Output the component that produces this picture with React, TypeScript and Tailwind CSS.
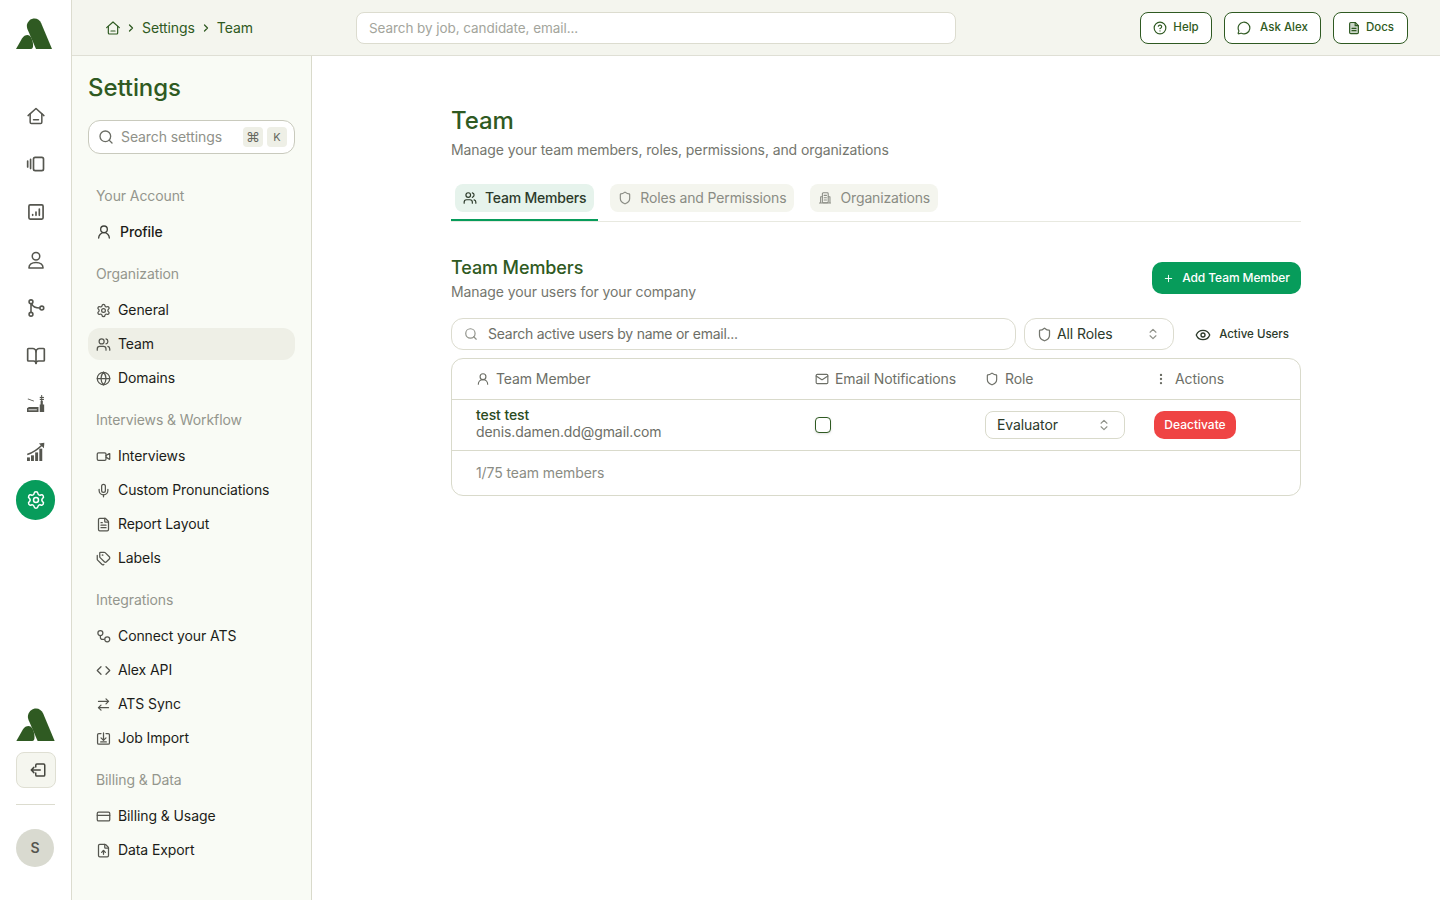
import React from "react";
import {
  Search, UserRound, Settings, Users, Globe, Video, Mic, FileText, Tags, Code, ArrowRightLeft, CreditCard, FileUp,
  Shield, MessageCircle, CircleHelp, Mail, EllipsisVertical, Eye, Plus, ChevronRight, ChevronsUpDown, BookOpen,
} from "lucide-react";

type IconProps = { className?: string };

const Logo = ({ className }: IconProps) => (
  <svg viewBox="0 0 36 31" className={className} fill="#2f5a22">
    <path d="M11 6.500C12.200 2.600 15 0.500 18.500 0.500C21.500 0.500 24 2.400 25.200 5.200L36 31H20L11.600 11.500C11 10 10.600 8 11 6.500Z" />
    <path d="M0 31L6 20.500C7.500 18 9.500 17 11.500 17C14 17 16 20 16.800 24.500C17.200 27 17.500 31 15 31Z" />
  </svg>
);

const HomeIcon = ({ className }: IconProps) => (
  <svg viewBox="0 0 24 24" className={className} fill="none" stroke="currentColor" strokeWidth="1.800" strokeLinejoin="round" strokeLinecap="round">
    <path d="M2.500 11.500L12 3L21.500 11.500" />
    <path d="M5 9.500V19.500C5 20.300 5.700 21 6.500 21H17.500C18.300 21 19 20.300 19 19.500V9.500" />
    <path d="M9 16.500H15" />
  </svg>
);
const CardsIcon = ({ className }: IconProps) => (
  <svg viewBox="0 0 24 24" className={className} fill="none" stroke="currentColor" strokeWidth="2" strokeLinecap="round">
    <rect x="9" y="4" width="12" height="16" rx="2" />
    <path d="M5.500 6.500V17.500M2 8.500V15.500" />
  </svg>
);
const ReportIcon = ({ className }: IconProps) => (
  <svg viewBox="0 0 24 24" className={className} fill="none" stroke="currentColor" strokeWidth="2" strokeLinecap="round">
    <rect x="3.500" y="3.500" width="17" height="17" rx="1.500" />
    <path d="M8 16V15M12 16V12M16 16V8.500" />
  </svg>
);
const PersonIcon = ({ className }: IconProps) => (
  <svg viewBox="0 0 24 24" className={className} fill="none" stroke="currentColor" strokeWidth="1.800" strokeLinejoin="round">
    <circle cx="12" cy="7.500" r="4.500" />
    <path d="M3.500 21.500C3.500 17.500 7 15 12 15C17 15 20.500 17.500 20.500 21.500Z" />
  </svg>
);
const BranchIcon = ({ className }: IconProps) => (
  <svg viewBox="0 0 24 24" className={className} fill="none" stroke="currentColor" strokeWidth="1.900">
    <circle cx="6" cy="4.500" r="2.300" />
    <circle cx="6" cy="19.500" r="2.300" />
    <circle cx="19" cy="12" r="2.300" />
    <path d="M6 6.800V17.200M6.800 6.800C8 10 12 12 16.700 12" />
  </svg>
);
const FactoryIcon = ({ className }: IconProps) => (
  <svg viewBox="0 0 24 24" className={className} fill="currentColor">
    <path d="M1.200 21.600V17L3.500 15.600H15V21.600Z" />
    <path d="M16.500 21.600V12.500H17.500V8H18.200V1.200H19.400V8H20.200V12.500H21.800V21.600Z" />
    <rect x="16.500" y="3.500" width="5" height="1.500" />
    <rect x="16.500" y="6" width="5" height="1.200" />
    <path d="M2.400 5.500L9.600 8.200L9.300 9L2 6.400Z" />
    <rect x="3" y="18.500" width="10" height="1" fill="#ffffff" />
  </svg>
);
const GrowthIcon = ({ className }: IconProps) => (
  <svg viewBox="0 0 24 24" className={className}>
    <g fill="currentColor">
      <rect x="1.200" y="18.500" width="3.500" height="4.300" />
      <rect x="6" y="16" width="3.500" height="6.800" />
      <rect x="11" y="12.500" width="3.500" height="10.300" />
      <rect x="16" y="8" width="3.500" height="14.800" />
      <path d="M15.500 1.800L22 1L21.500 7.500Z" />
    </g>
    <path d="M1.500 15C8 13 14 9 20 3" fill="none" stroke="currentColor" strokeWidth="1.800" />
  </svg>
);
const ExitIcon = ({ className }: IconProps) => (
  <svg viewBox="0 0 24 24" className={className} fill="none" stroke="currentColor" strokeWidth="2" strokeLinecap="round" strokeLinejoin="round">
    <path d="M9 8V5.500C9 4.700 9.700 4 10.500 4H19.500C20.300 4 21 4.700 21 5.500V18.500C21 19.300 20.300 20 19.500 20H10.500C9.700 20 9 19.300 9 18.500V16" />
    <path d="M15 12H3M6.500 8.500L3 12L6.500 15.500" />
  </svg>
);
const ConnectIcon = ({ className }: IconProps) => (
  <svg viewBox="0 0 24 24" className={className} fill="none" stroke="currentColor" strokeWidth="2">
    <circle cx="7" cy="6.500" r="4" />
    <circle cx="18" cy="16.500" r="4" />
    <path d="M7 10.500V13C7 15 8.500 16.500 10.500 16.500H14" />
  </svg>
);
const ImportBoxIcon = ({ className }: IconProps) => (
  <svg viewBox="0 0 24 24" className={className} fill="none" stroke="currentColor" strokeWidth="2" strokeLinecap="round" strokeLinejoin="round">
    <path d="M8 4H4.500C3.400 4 2.500 4.900 2.500 6V19C2.500 20.100 3.400 21 4.500 21H19.500C20.600 21 21.500 20.100 21.500 19V6C21.500 4.900 20.600 4 19.500 4H16" />
    <path d="M12 3V14.500M8 11L12 15L16 11M7.500 17.500H16.500" />
  </svg>
);
const OrgIcon = ({ className }: IconProps) => (
  <svg viewBox="0 0 24 24" className={className} fill="none" stroke="currentColor" strokeWidth="1.800" strokeLinecap="round" strokeLinejoin="round">
    <rect x="7.500" y="3" width="10" height="17" rx="1.500" />
    <path d="M7.500 10H4.500V20M17.500 10H20.500V20M2.500 20.500H21.500M10.500 7.500H14.500M10.500 11.500H14.500M10.500 15.500H14.500" />
  </svg>
);
const DocIcon = ({ className }: IconProps) => (
  <svg viewBox="0 0 24 24" className={className} stroke="currentColor" strokeWidth="2" strokeLinecap="round" strokeLinejoin="round" fill="none">
    <path d="M14 2.500H6.500C5.400 2.500 4.500 3.400 4.500 4.500V19.500C4.500 20.600 5.400 21.500 6.500 21.500H17.500C18.600 21.500 19.500 20.600 19.500 19.500V8Z" fill="currentColor" fillOpacity="0.25" />
    <path d="M14 2.500V8H19.500M8.500 12.500H15.500M8.500 16.500H15.500" />
  </svg>
);

const railIcons = [HomeIcon, CardsIcon, ReportIcon, PersonIcon, BranchIcon, BookOpen, FactoryIcon, GrowthIcon];

const Rail = () => (
  <aside className="flex w-[72px] shrink-0 flex-col border-r border-[#dcdccf] bg-white">
    <div className="flex h-[92px] shrink-0 items-start pl-4 pt-[18px]">
      <Logo className="h-[31px] w-9" />
    </div>
    {railIcons.map((Icon, i) => (
      <div key={i} className="flex h-12 shrink-0 items-center justify-center text-[#55564f]">
        <Icon className="h-5 w-5" />
      </div>
    ))}
    <div className="flex h-12 shrink-0 items-center pl-4">
      <div className="flex h-10 w-[39px] items-center justify-center rounded-full bg-[#079c5b] text-white">
        <Settings className="h-5 w-5" strokeWidth={1.8} />
      </div>
    </div>
    <div className="mt-auto flex flex-col pb-[33px] pl-4">
      <Logo className="h-[33px] w-[39px]" />
      <div className="mt-[11px] flex h-9 w-10 items-center justify-center rounded-lg border border-[#dfdfd3] bg-[#f5f6ef] pl-1 text-[#45463f]">
        <ExitIcon className="h-[18px] w-[18px]" />
      </div>
      <div className="mt-4 h-px w-[39px] bg-[#dcdccf]" />
      <div className="mt-6 flex h-[38px] w-[38px] items-center justify-center rounded-full bg-[#d9dad0] text-sm font-semibold text-[#55564f]">
        S
      </div>
    </div>
  </aside>
);

const Header = () => (
  <header className="flex h-14 shrink-0 items-center border-b border-[#dfdfd5] bg-[#f4f5ee] pr-8 pl-[33px]">
    <div className="flex w-[251px] items-center text-sm text-[#2f5a22]">
      <HomeIcon className="h-4 w-4" />
      <ChevronRight className="ml-[4px] h-3 w-3" strokeWidth={2.5} />
      <span className="ml-[5px]">Settings</span>
      <ChevronRight className="ml-[5px] h-3 w-3" strokeWidth={2.5} />
      <span className="ml-[5px]">Team</span>
    </div>
    <div className="flex h-8 w-[600px] items-center rounded-lg border border-[#dcdccf] bg-white px-3 pt-px text-[13.5px] tracking-[-0.005em] text-[#a3a59c]">
      Search by job, candidate, email...
    </div>
    <div className="ml-auto flex items-center gap-3 text-[11.5px] font-medium tracking-normal text-[#2f5a22]">
      <div className="flex h-8 w-[72px] items-center justify-center gap-[6px] rounded-lg border border-[#2f5a22] bg-white pt-px">
        <CircleHelp className="h-[14px] w-[14px]" /> Help
      </div>
      <div className="flex h-8 w-[97px] items-center justify-center gap-[9px] rounded-lg border border-[#2f5a22] bg-white pt-px">
        <MessageCircle className="h-[14px] w-[14px]" /> Ask Alex
      </div>
      <div className="flex h-8 w-[75px] items-center justify-center gap-[5px] rounded-lg border border-[#2f5a22] bg-white pt-px">
        <DocIcon className="h-[14px] w-[14px]" /> Docs
      </div>
    </div>
  </header>
);

type NavItem = { label: string; Icon: React.ComponentType<IconProps>; active?: boolean };
const groups: { title: string; items: NavItem[] }[] = [
  { title: "Organization", items: [{ label: "General", Icon: Settings }, { label: "Team", Icon: Users, active: true }, { label: "Domains", Icon: Globe }] },
  { title: "Interviews & Workflow", items: [{ label: "Interviews", Icon: Video }, { label: "Custom Pronunciations", Icon: Mic }, { label: "Report Layout", Icon: FileText }, { label: "Labels", Icon: Tags }] },
  { title: "Integrations", items: [{ label: "Connect your ATS", Icon: ConnectIcon }, { label: "Alex API", Icon: Code }, { label: "ATS Sync", Icon: ArrowRightLeft }, { label: "Job Import", Icon: ImportBoxIcon }] },
  { title: "Billing & Data", items: [{ label: "Billing & Usage", Icon: CreditCard }, { label: "Data Export", Icon: FileUp }] },
];

const SideNav = () => (
  <nav className="w-[240px] shrink-0 border-r border-[#d9dacb] bg-[#f9fbf5] px-4 pt-4">
    <h1 className="text-2xl leading-8 font-medium text-[#2f5a22]">Settings</h1>
    <div className="mt-4 flex h-[34px] items-center rounded-xl border border-[#c9cabd] bg-white pr-[7px] pl-[9px]">
      <Search className="h-4 w-4 text-[#6b6d65]" />
      <span className="ml-[7px] text-sm text-[#8f9189]">Search settings</span>
      <span className="ml-auto flex gap-1">
        <span className="flex h-5 w-5 items-center justify-center rounded bg-[#eeefe6] text-sm text-[#66685f]">⌘</span>
        <span className="flex h-5 w-5 items-center justify-center rounded bg-[#eeefe6] text-[11px] text-[#66685f]">K</span>
      </span>
    </div>
    <div className="mt-8 px-2 text-sm leading-5 text-[#94968d]">Your Account</div>
    <div className="mt-[10px] flex h-8 items-center px-2 text-sm font-medium text-[#1c1d19]">
      <UserRound className="h-4 w-4 text-[#3f403a]" />
      <span className="ml-2">Profile</span>
    </div>
    {groups.map((g) => (
      <div key={g.title} className="mt-4">
        <div className="px-2 text-sm leading-5 text-[#94968d]">{g.title}</div>
        <div className="mt-[10px] flex flex-col gap-[2px]">
          {g.items.map(({ label, Icon, active }) => (
            <div key={label} className={active ? "flex h-8 items-center rounded-xl bg-[#eeefe6] px-2 text-sm text-[#1c1d19]" : "flex h-8 items-center px-2 text-sm text-[#1c1d19]"}>
              <Icon className="h-[15px] w-[15px] text-[#55564f]" />
              <span className="ml-[7px]">{label}</span>
            </div>
          ))}
        </div>
      </div>
    ))}
  </nav>
);

const Tab = ({ label, Icon, active }: { label: string; Icon: React.ComponentType<IconProps>; active?: boolean }) => (
  <div className={active ? "border-b-2 border-[#079c5b] px-1 pb-2" : "border-b-2 border-transparent px-1 pb-2"}>
    <div className={active ? "flex h-7 items-center gap-2 rounded-lg bg-[#e6f3ec] px-2 text-sm font-medium tracking-[-0.015em] text-[#2c3a2a]" : "flex h-7 items-center gap-2 rounded-lg bg-[#f4f5ee] px-2 text-sm tracking-[-0.01em] text-[#8a8c84]"}>
      <Icon className="h-[14px] w-[14px]" />
      {label}
    </div>
  </div>
);

const Main = () => (
  <main className="min-w-0 flex-1 bg-white">
    <div className="mx-auto w-[850px] pt-[49px]">
      <h2 className="text-2xl leading-8 font-medium text-[#2f5a22]">Team</h2>
      <p className="mt-[3px] text-sm leading-5 text-[#74766e]">Manage your team members, roles, permissions, and organizations</p>
      <div className="mt-[24px] flex h-[38px] gap-2 border-b border-[#e8e9e0]">
        <Tab label="Team Members" Icon={Users} active />
        <Tab label="Roles and Permissions" Icon={Shield} />
        <Tab label="Organizations" Icon={OrgIcon} />
      </div>
      <div className="mt-10 flex items-start justify-between">
        <div className="-mt-[6px]">
          <h3 className="text-lg leading-6 font-medium text-[#2f5a22]">Team Members</h3>
          <p className="mt-[2px] text-sm leading-5 text-[#74766e]">Manage your users for your company</p>
        </div>
        <div className="flex h-8 w-[149px] items-center justify-center gap-2 rounded-[10px] bg-[#079c5b] text-xs font-medium text-white">
          <Plus className="h-[11px] w-[11px]" /> Add Team Member
        </div>
      </div>
      <div className="mt-4 flex items-center gap-2">
        <div className="flex h-8 w-[565px] items-center gap-[10px] rounded-xl border border-[#dcdccf] bg-white px-3 text-sm tracking-[-0.018em] text-[#6d6f67]">
          <Search className="h-[14px] w-[14px] text-[#8f9189]" />
          Search active users by name or email...
        </div>
        <div className="flex h-8 w-[150px] items-center rounded-xl border border-[#dcdccf] bg-white pr-[13px] pl-3 text-sm text-[#2c3a2a]">
          <Shield className="h-[15px] w-[15px] text-[#74766e]" />
          <span className="ml-[5px]">All Roles</span>
          <ChevronsUpDown className="ml-auto h-[14px] w-[14px] text-[#8f9189]" />
        </div>
        <div className="flex h-8 w-[119px] items-center justify-end gap-[8px] pt-px pr-3 text-[11.5px] font-medium tracking-normal text-[#2c3a2a]">
          <Eye className="h-4 w-4" /> Active Users
        </div>
      </div>
      <div className="mt-2 overflow-hidden rounded-xl border border-[#d9dacb]">
        <div className="grid h-[41px] grid-cols-[339px_170px_169px_1fr] items-center border-b border-[#d9dacb] pl-6 text-sm text-[#6d6f67]">
          <div className="flex items-center gap-[6px]"><UserRound className="h-[14px] w-[14px]" /> Team Member</div>
          <div className="flex items-center gap-[6px]"><Mail className="h-[14px] w-[14px]" /> Email Notifications</div>
          <div className="flex items-center gap-[6px]"><Shield className="h-[14px] w-[14px]" /> Role</div>
          <div className="flex items-center gap-[7px]"><EllipsisVertical className="h-[14px] w-[14px]" /> Actions</div>
        </div>
        <div className="grid h-[51px] grid-cols-[339px_170px_169px_1fr] items-center border-b border-[#d9dacb] pl-6">
          <div className="-mt-[4px] text-sm leading-[17px]">
            <div className="font-medium text-[#2a4a22]">test test</div>
            <div className="text-[#6d6f67]">denis.damen.dd@gmail.com</div>
          </div>
          <div className="h-4 w-4 rounded border border-[#2f5a22] bg-white shadow-sm" />
          <div className="flex h-7 w-[140px] items-center rounded-lg border border-[#d9dacb] pr-[13px] pl-[11px] text-sm text-[#2c3a2a]">
            Evaluator
            <ChevronsUpDown className="ml-auto h-[14px] w-[14px] text-[#8f9189]" />
          </div>
          <div className="flex h-7 w-[82px] items-center justify-center rounded-[10px] bg-[#ef4444] text-xs font-medium tracking-normal text-white">
            Deactivate
          </div>
        </div>
        <div className="flex h-11 items-center pl-6 text-sm text-[#8a8c84]">1/75 team members</div>
      </div>
    </div>
  </main>
);

export default function App() {
  return (
    <div className="flex h-screen overflow-hidden bg-white font-['Inter',sans-serif] tracking-[-0.006em]">
      <Rail />
      <div className="flex min-w-0 flex-1 flex-col">
        <Header />
        <div className="flex min-h-0 flex-1">
          <SideNav />
          <Main />
        </div>
      </div>
    </div>
  );
}
